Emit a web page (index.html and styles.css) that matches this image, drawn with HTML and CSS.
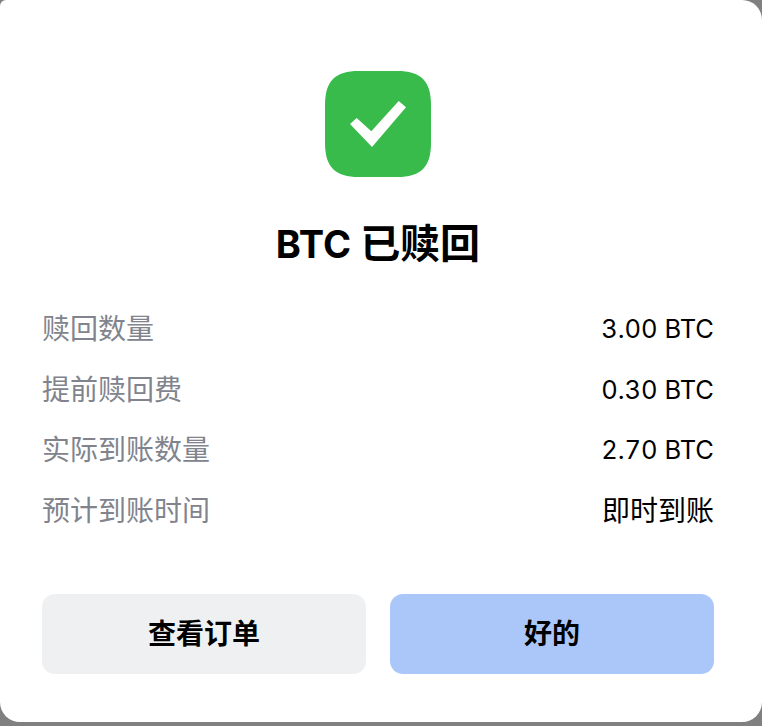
FILE: index.html
```html
<!DOCTYPE html>
<html lang="zh-CN">
<head>
    <meta charset="UTF-8">
    <title>BTC 已赎回</title>
    <link rel="stylesheet" href="styles.css">
</head>
<body>
    <div class="dialog">
        <svg class="status-icon" width="106" height="106" viewBox="0 0 106 106">
            <path d="M34 0H72C96 0 106 10 106 34V72C106 96 96 106 72 106H34C10 106 0 96 0 72V34C0 10 10 0 34 0Z" fill="#39bb4c"/>
            <path d="M25 53L31.7 47L46.3 60.3L73.7 30L81 36.3L47 76Z" fill="#fff"/>
        </svg>
        <h1 class="title">BTC <span class="title-cjk">已赎回</span></h1>
        <div class="rows">
            <div class="row"><span class="label">赎回数量</span><span class="value">3.00 BTC</span></div>
            <div class="row"><span class="label">提前赎回费</span><span class="value">0.30 BTC</span></div>
            <div class="row"><span class="label">实际到账数量</span><span class="value">2.70 BTC</span></div>
            <div class="row"><span class="label">预计到账时间</span><span class="value value-cjk">即时到账</span></div>
        </div>
        <div class="actions">
            <button class="btn btn-plain" type="button">查看订单</button>
            <button class="btn btn-primary" type="button">好的</button>
        </div>
    </div>
</body>
</html>
```

FILE: styles.css
```css
html, body{
    margin: 0;
    height: 726px;
    background-color: #808080;
    overflow: hidden;
}
body{
    font-family: "Inter", "Noto Sans CJK SC", sans-serif;
}
.dialog{
    box-sizing: border-box;
    height: 722px;
    padding: 71px 48px 0 42px;
    background-color: #fff;
    border-radius: 6px 20px 20px 20px;
    display: flex;
    flex-direction: column;
    align-items: center;
}
.status-icon{
    display: block;
    flex: none;
}
.title{
    margin: 40px 0 0;
    height: 54px;
    line-height: 54px;
    font-size: 38px;
    font-weight: 700;
    color: #000;
}
.title-cjk{
    font-size: 40px;
}
.rows{
    width: 100%;
    margin-top: 38px;
    display: flex;
    flex-direction: column;
    gap: 20.5px;
}
.row{
    display: flex;
    justify-content: space-between;
    height: 40px;
    line-height: 40px;
    font-size: 28px;
}
.label{
    color: #81848c;
}
.value{
    color: #000;
    font-size: 25.5px;
    font-variant-numeric: tabular-nums;
}
.value-cjk{
    font-size: 28px;
}
.actions{
    width: 100%;
    margin-top: 63px;
    display: flex;
    gap: 24px;
}
.btn{
    flex: 1;
    height: 80px;
    border: none;
    border-radius: 13px;
    padding: 0 0 4px;
    font-family: inherit;
    font-size: 28px;
    font-weight: 700;
    color: #000;
}
.btn-plain{
    background-color: #eff0f2;
}
.btn-primary{
    background-color: #abc7fa;
}
```
